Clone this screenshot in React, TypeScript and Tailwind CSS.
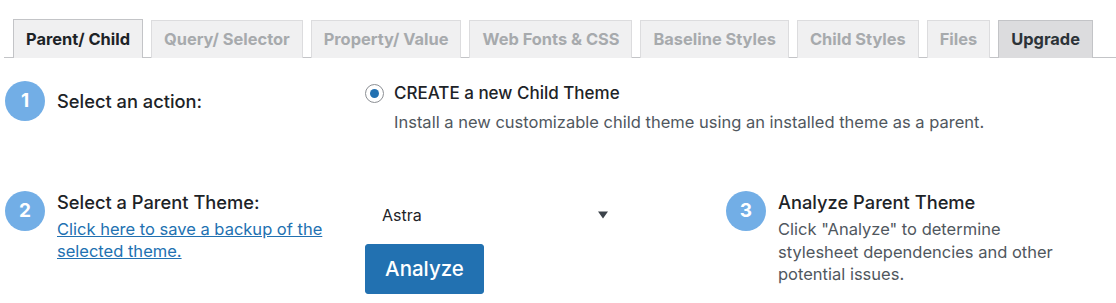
import { useState } from "react";

const tabs = [
  "Parent/ Child",
  "Query/ Selector",
  "Property/ Value",
  "Web Fonts & CSS",
  "Baseline Styles",
  "Child Styles",
  "Files",
  "Upgrade",
];

function StepNumber({ n }: { n: number }) {
  return (
    <div className="w-10 h-10 shrink-0 rounded-full bg-[#72aee6] text-white flex items-center justify-center text-[19px] font-bold">
      {n}
    </div>
  );
}

export default function App() {
  const [active] = useState(0);
  const [theme, setTheme] = useState("astra");

  return (
    <div className="w-[1116px] h-[303px] bg-white text-[#1d2327] font-['Inter','Liberation_Sans',sans-serif] overflow-hidden">
      {/* tabs */}
      <div className="mt-[19px] ml-1 flex items-end gap-2 pl-[9px] border-b border-[#c3c4c7]">
        {tabs.map((t, i) => {
          const isActive = i === active;
          const isUpgrade = t === "Upgrade";
          return (
            <div
              key={t}
              className={
                "shrink-0 whitespace-nowrap h-[38px] px-3 flex items-center text-[16.4px] font-bold border border-b-0 -mb-px " +
                (isActive
                  ? "bg-[#f0f0f1] border-[#c3c4c7] text-[#1d2327] h-[39px]"
                  : isUpgrade
                  ? "bg-[#dcdcde] border-[#c3c4c7] text-[#2c3338]"
                  : "bg-[#f0f0f1] border-[#dcdcde] text-[#a7aaad]")
              }
            >
              {t}
            </div>
          );
        })}
      </div>

      {/* step 1 */}
      <div className="flex pl-[5px] pt-[23px] h-[132px]">
        <div className="w-[360px] h-10 flex items-center gap-3">
          <StepNumber n={1} />
          <span className="text-[18.3px] font-medium pt-[2px]">Select an action:</span>
        </div>
        <div>
          <label className="flex items-center gap-[10px]">
            <span className="w-[19px] h-[19px] rounded-full border border-[#8c8f94] bg-white flex items-center justify-center">
              <span className="w-[9px] h-[9px] rounded-full bg-[#2271b1]" />
            </span>
            <span className="text-[17px] font-medium">CREATE a new Child Theme</span>
          </label>
          <p className="ml-[29px] mt-[3px] text-[16.5px] text-[#50575e]">
            Install a new customizable child theme using an installed theme as a parent.
          </p>
        </div>
      </div>

      {/* steps 2 & 3 */}
      <div className="flex pl-[5px] pt-px">
        <div className="w-[360px] flex items-start gap-3">
          <StepNumber n={2} />
          <div>
            <div className="text-[18.3px] font-medium leading-[22px]">Select a Parent Theme:</div>
            <a href="#" className="block mt-[5px] text-[16.5px] leading-[22px] text-[#2271b1] underline">
              Click here to save a backup of the
              <br />
              selected theme.
            </a>
          </div>
        </div>
        <div className="w-[361px] pt-[10px]">
          <div className="relative w-[250px]">
            <select
              value={theme}
              onChange={(e) => setTheme(e.target.value)}
              className="w-full appearance-none bg-white pl-[17px] pr-8 py-[2px] text-[16px] text-[#1d2327] outline-none"
            >
              <option value="astra">Astra</option>
            </select>
            <span className="absolute right-[7px] top-1/2 -translate-y-1/2 w-0 h-0 border-l-[5px] border-r-[5px] border-t-[7px] border-l-transparent border-r-transparent border-t-[#3c434a]" />
          </div>
          <button className="mt-[15px] w-[119px] h-[50px] rounded-[3px] bg-[#2271b1] border border-[#2271b1] text-white text-[20.5px] font-medium">
            Analyze
          </button>
        </div>
        <div className="flex items-start gap-3">
          <StepNumber n={3} />
          <div>
            <div className="text-[18.3px] font-medium leading-[22px]">Analyze Parent Theme</div>
            <p className="mt-[5px] text-[16.5px] leading-[22.5px] text-[#50575e] w-[285px]">
              Click "Analyze" to determine stylesheet dependencies and other potential issues.
            </p>
          </div>
        </div>
      </div>
    </div>
  );
}
